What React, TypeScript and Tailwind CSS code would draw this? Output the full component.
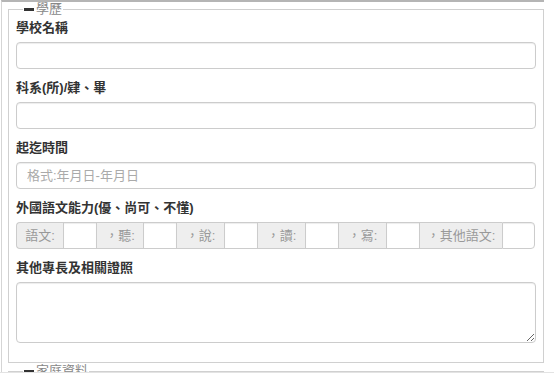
import React from "react";

const font = { fontFamily: '"Liberation Sans", "Noto Sans CJK TC", sans-serif' };

function Label({ children }: { children: React.ReactNode }) {
  return (
    <label className="block text-[13px] leading-[18px] font-bold text-[#333] mb-[5px]">
      {children}
    </label>
  );
}

const inputCls =
  "block w-full h-[27px] border border-[#ccc] rounded-[4px] bg-white px-[10px] text-[13px] text-[#555] placeholder:text-[#aaa] shadow-[inset_0_1px_1px_rgba(0,0,0,0.075)] outline-none";

function Addon({ w, children, first }: { w: string; children: React.ReactNode; first?: boolean }) {
  return (
    <span
      className={`${w} ${first ? "rounded-l-[4px]" : ""} h-[27px] flex items-center justify-center bg-[#eee] border-t border-b border-l border-[#ccc] text-[13px] text-[#999] whitespace-nowrap`}
    >
      {children}
    </span>
  );
}

function Cell({ last }: { last?: boolean }) {
  return (
    <input
      className={`w-[33px] h-[27px] bg-white border-t border-b border-l border-[#ccc] ${last ? "border-r rounded-r-[4px]" : ""} outline-none shadow-[inset_0_1px_1px_rgba(0,0,0,0.075)]`}
    />
  );
}

function Legend({ children }: { children: React.ReactNode }) {
  return (
    <legend className="ml-[7px] px-[1px] text-[13px] leading-[14px] text-[#888] flex items-center">
      <span className="inline-block w-[10px] h-[3px] bg-[#333] mr-[2px]" />
      {children}
    </legend>
  );
}

export default function App() {
  return (
    <div className="w-[554px] h-[379px] bg-white overflow-hidden" style={font}>
      <div className="ml-[1px] w-[543px] h-[372px] border-t-2 border-l border-t-[#b5b5b5] border-l-[#d5d5d5] overflow-hidden">
        <fieldset className="ml-[6px] w-[536px] border border-[#d0d0d0] px-[7px] pt-[3px] pb-[19px]">
          <Legend>學歷</Legend>
          <div className="mb-[10px]">
            <Label>學校名稱</Label>
            <input className={inputCls} />
          </div>
          <div className="mb-[10px]">
            <Label>科系(所)/肄、畢</Label>
            <input className={inputCls} />
          </div>
          <div className="mb-[10px]">
            <Label>起迄時間</Label>
            <input className={inputCls} placeholder="格式:年月日-年月日" />
          </div>
          <div className="mb-[10px]">
            <Label>外國語文能力(優、尚可、不懂)</Label>
            <div className="flex">
              <Addon w="w-[47px]" first>
                語文:
              </Addon>
              <Cell />
              <Addon w="w-[47px]">，聽:</Addon>
              <Cell />
              <Addon w="w-[48px]">，說:</Addon>
              <Cell />
              <Addon w="w-[48px]">，讀:</Addon>
              <Cell />
              <Addon w="w-[48px]">，寫:</Addon>
              <Cell />
              <Addon w="w-[83px]">，其他語文:</Addon>
              <Cell last />
            </div>
          </div>
          <div>
            <Label>其他專長及相關證照</Label>
            <textarea className="block w-full h-[61px] border border-[#ccc] rounded-[4px] bg-white px-[10px] py-[5px] text-[13px] shadow-[inset_0_1px_1px_rgba(0,0,0,0.075)] outline-none" />
          </div>
        </fieldset>
        <fieldset className="ml-[6px] mt-[1px] w-[536px] border border-[#d0d0d0] px-[7px] pt-[3px] pb-[10px]">
          <Legend>家庭資料</Legend>
          <div className="h-[40px]" />
        </fieldset>
      </div>
      <div className="h-px w-full bg-[#e3e3e3]" />
    </div>
  );
}
